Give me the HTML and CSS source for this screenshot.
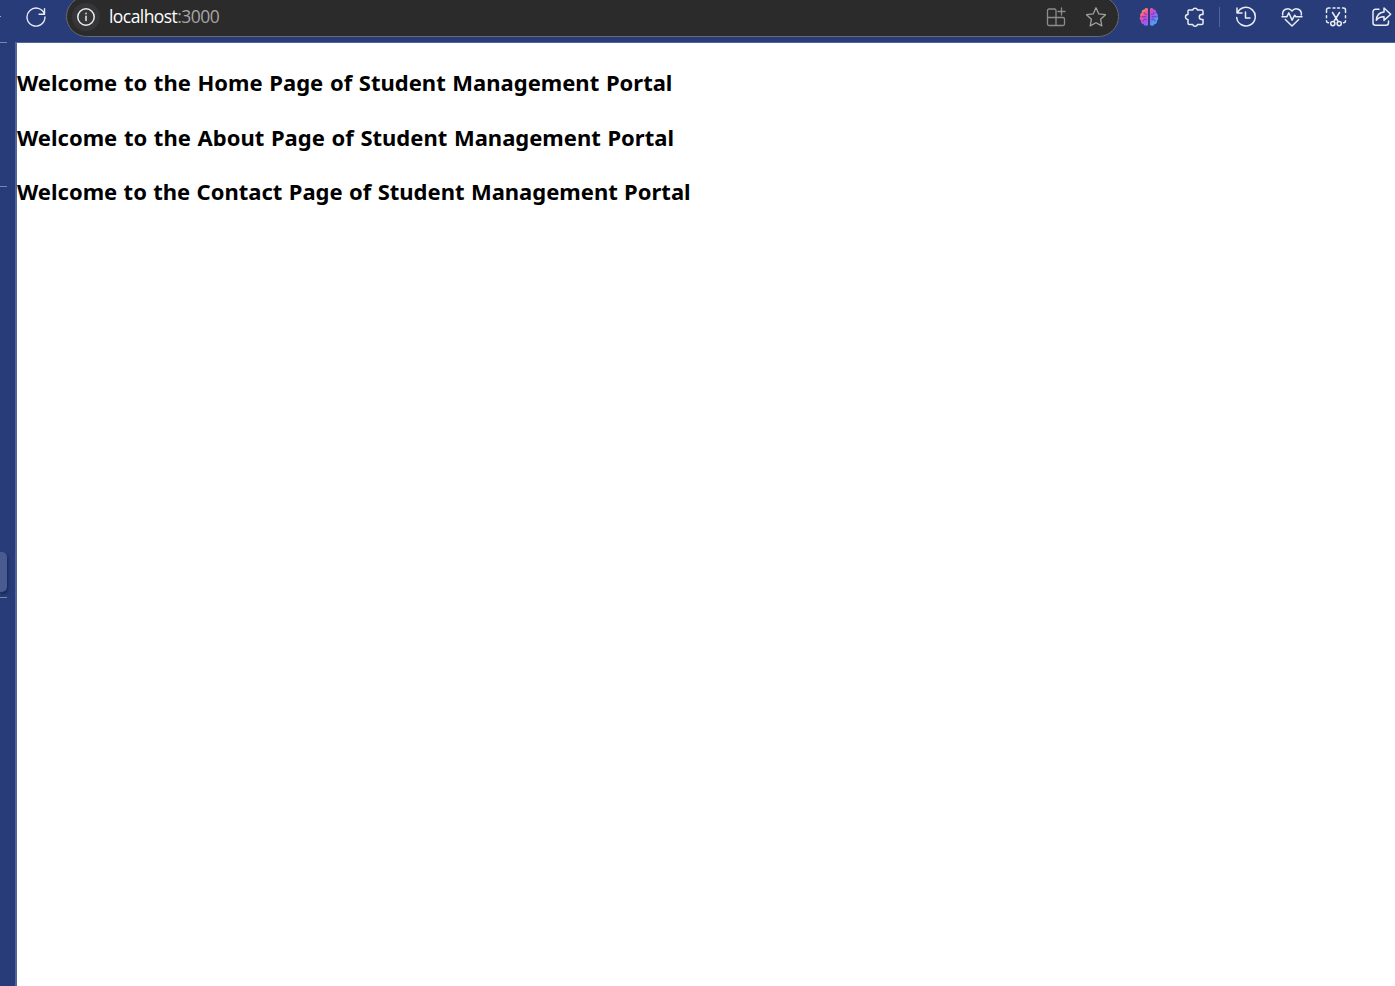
FILE: index.html
```html
<!DOCTYPE html>
<html lang="en">
<head>
<meta charset="utf-8">
<title>Student Management Portal</title>
<link rel="stylesheet" href="styles.css">
</head>
<body>
<header class="toolbar">
  <svg class="icon reload" viewBox="0 0 24 24"><path d="M21.300 9A9.800 9.800 0 1 0 21.800 12M21.300 3v6h-6"/></svg>
  <div class="address">
    <span class="info"><svg class="icon" viewBox="0 0 20 20"><circle cx="10" cy="10" r="8.2"/><path d="M10 9.300v4.200M10 6.200v.6"/></svg></span>
    <span class="url">localhost<span class="port">:3000</span></span>
    <svg class="icon apps" viewBox="0 0 20 20"><path d="M10 18.500V3.500a1.500 1.500 0 0 0-1.500-1.500H3a1.500 1.500 0 0 0-1.500 1.500V17A1.500 1.500 0 0 0 3 18.500h14a1.500 1.500 0 0 0 1.500-1.500v-5a1.500 1.500 0 0 0-1.500-1.500H1.500M15.500 1v7M12 4.500h7"/></svg>
    <svg class="icon star" viewBox="0 0 22 22"><path d="M11 1.800l2.800 6.100 6.700.8-4.900 4.600 1.200 6.600L11 16.700l-5.800 3.200 1.200-6.600L1.500 8.700l6.700-.8z"/></svg>
  </div>
  <div class="actions">
    <svg class="icon brain" viewBox="0 0 20 20">
      <defs><linearGradient id="g" x1="0" y1="0" x2="1" y2="1"><stop offset="0.1" stop-color="#ff9a45"/><stop offset=".32" stop-color="#f34ba8"/><stop offset=".55" stop-color="#a653ee"/><stop offset=".9" stop-color="#31b8ff"/></linearGradient></defs>
      <path fill="url(#g)" d="M9 2C8.300.500 6.200.800 5.400 2.500 3.500 2.500 2.400 4 2.700 5.800 1.300 6.700.800 8.200 1.400 9.500.3 11 .6 12.800 2 13.700c-.2 2 1 3.400 2.700 3.500 1 2 3.400 2.200 4.300.6zM11 2c.7-1.500 2.800-1.200 3.600.5 1.900 0 3 1.500 2.700 3.300 1.400.9 1.900 2.400 1.300 3.700 1.100 1.500.8 3.300-.6 4.200.2 2-1 3.400-2.700 3.500-1 2-3.400 2.200-4.300.6z"/>
      <path class="folds" d="M5 5.500c0 1.500 1 2 2.300 1.800M2.800 9.800h4M4 14c.3-1.700 1.500-2 3-1.500M15 5.500c0 1.500-1 2-2.300 1.800M17.200 9.800h-4M16 14c-.3-1.700-1.500-2-3-1.500"/>
    </svg>
    <svg class="icon puzzle" viewBox="0 0 22 22"><path d="M5 4h3.700a2.500 2.500 0 0 1 4.800 0h4.200a1.300 1.300 0 0 1 1.300 1.300v3.200h-1.200a2.500 2.500 0 0 0 0 5H19v3.700a1.300 1.300 0 0 1-1.300 1.300h-4.200a2.500 2.500 0 0 1-4.800 0H5.300A1.300 1.300 0 0 1 4 17.200v-3.700a2.500 2.500 0 0 1 0-5V5a1 1 0 0 1 1-1z"/></svg>
    <span class="divider"></span>
    <svg class="icon history" viewBox="0 0 22 22"><path d="M2 2v5h5M2.400 7a9.300 9.300 0 1 1-.7 4.500M10.500 6v6H15"/></svg>
    <svg class="icon heart" viewBox="0 0 22 22"><path d="M1.700 9C.8 3.500 7.500.5 11 5c3.500-4.500 10.200-1.500 9.300 4M1 10.800h4.800l2-4 3.300 7.400 2.600-5 1.200 1.600H21M4.300 13.500 11 20l6.700-6.500"/></svg>
    <svg class="icon snip" viewBox="0 0 22 22"><path d="M1.500 6.500V4a2 2 0 0 1 2-2H5M8 2h2M12.500 2h2M17.500 2h1a2 2 0 0 1 2 2v2.500M1.500 9.800v2M20.500 9.800v2M1.500 14.800a2 2 0 0 0 2 2M20.500 14.800a2 2 0 0 1-2 2M7.500 6.500l5.600 9M14.500 6.500l-5.600 9"/><circle cx="7.800" cy="17.600" r="2.100"/><circle cx="14.200" cy="17.600" r="2.100"/></svg>
    <svg class="icon share" viewBox="0 0 22 22"><path d="M8 3.200H4.500a2.500 2.500 0 0 0-2.500 2.500v11a2.500 2.500 0 0 0 2.500 2.500H15a2.500 2.500 0 0 0 2.500-2.500V15M13 2l6.700 6.200L13 14.400v-3.700c-3.300-.1-5.700.8-7.700 3.500.3-4.500 3-7.900 7.700-8.300z"/></svg>
  </div>
</header>
<div class="window">
  <aside class="sidebar">
    <i class="tick tick-top"></i>
    <i class="tick tick-upper"></i>
    <i class="tab"></i>
    <i class="tick tick-lower"></i>
  </aside>
  <main class="page">
    <h2 class="home">Welcome to the Home Page of Student Management Portal</h2>
    <h2 class="about">Welcome to the About Page of Student Management Portal</h2>
    <h2 class="contact">Welcome to the Contact Page of Student Management Portal</h2>
  </main>
</div>
</body>
</html>
```
FILE: styles.css
```css
* { box-sizing: border-box; }
body {
  margin: 0;
  height: 986px;
  overflow: hidden;
  background: #273c78;
  font-family: "Noto Sans", "Open Sans", sans-serif;
}
.toolbar {
  position: relative;
  display: flex;
  align-items: flex-start;
  height: 42px;
  overflow: hidden;
}
.toolbar::before {
  content: "";
  position: absolute;
  left: 0;
  top: 16px;
  width: 1px;
  height: 1px;
  background: #a5b1cf;
}
.icon {
  display: block;
  flex: none;
  width: 22px;
  height: 22px;
  fill: none;
  stroke: #e9ecf4;
  stroke-width: 1.5;
  stroke-linecap: round;
  stroke-linejoin: round;
}
.reload { margin: 6px 0 0 25px; }
.address {
  display: flex;
  align-items: center;
  width: 1053px;
  height: 41px;
  margin: -4px 0 0 19px;
  padding: 0 10px 0 4px;
  border: 1.5px solid #6a6a6a;
  border-radius: 21px;
  background: #2b2b2b;
}
.info {
  display: grid;
  place-items: center;
  width: 28px;
  height: 28px;
  margin-left: 1px;
  border-radius: 50%;
  background: #363636;
}
.info .icon { width: 20px; height: 20px; }
.url {
  position: relative;
  top: -1px;
  margin-left: 9px;
  color: #fff;
  font-family: "Open Sans", "Noto Sans", sans-serif;
  font-size: 17.5px;
  letter-spacing: -.56px;
}
.port { color: #a6a6a6; }
.apps { width: 20px; height: 20px; margin-left: auto; stroke: #8c8c8c; stroke-width: 1.3; }
.star { margin: 0 1px 0 19px; stroke: #a0a0a0; stroke-width: 1.3; }
.actions { display: flex; align-items: center; height: 34px; margin-left: 20px; }
.brain { width: 20px; height: 20px; stroke: none; }
.brain .folds { stroke: #5147ad; stroke-width: 1; }
.puzzle { margin-left: 24.5px; }
.divider { width: 1px; height: 20px; margin-left: 13.5px; background: #53669a; }
.history { margin-left: 15px; }
.heart { margin-left: 23.5px; }
.snip { margin-left: 22.5px; }
.share { margin-left: 24px; }
.window { display: flex; height: 944px; }
.sidebar {
  display: flex;
  flex: none;
  flex-direction: column;
  width: 17px;
  border-right: 2px solid #53669a;
}
.tick { width: 7px; height: 1px; background: #7886ac; }
.tick-upper { margin-top: 143px; }
.tab {
  width: 7px;
  height: 40px;
  margin-top: 365px;
  border-radius: 0 5px 5px 0;
  background: #495b91;
  box-shadow: 1px 2px 3px #172852;
}
.tick-lower { margin-top: 5px; }
.page {
  flex: 1;
  border-top: 1px solid #53669a;
  padding-top: 24px;
  background: #fff;
}
h2 {
  margin: 0 0 24.5px;
  color: #000;
  font-size: 22px;
  font-weight: 700;
  line-height: 30px;
  word-spacing: .95px;
  white-space: nowrap;
}
.contact { word-spacing: .65px; }
```
